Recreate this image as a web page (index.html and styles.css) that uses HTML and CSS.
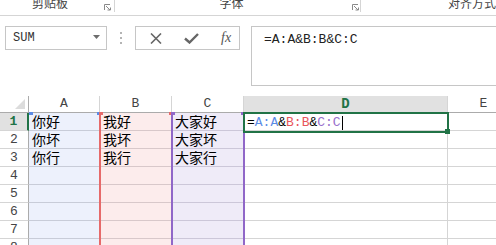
FILE: index.html
```html
<!DOCTYPE html>
<html lang="zh">
<head>
    <meta charset="UTF-8">
    <title>合并列</title>
    <link rel="stylesheet" href="styles.css">
</head>
<body>
    <div class="ribbon">
        <div class="group g-clip">
            <span class="label">剪贴板</span>
            <svg class="launcher" viewBox="0 0 7 7"><path d="M0.5 6V0.5H6" fill="none" stroke="#8a8a8a"/><path d="M2 2L6 6M3.5 6H6.5V3.5" fill="none" stroke="#8a8a8a"/></svg>
        </div>
        <div class="group g-font">
            <span class="label">字体</span>
            <svg class="launcher" viewBox="0 0 7 7"><path d="M0.5 6V0.5H6" fill="none" stroke="#8a8a8a"/><path d="M2 2L6 6M3.5 6H6.5V3.5" fill="none" stroke="#8a8a8a"/></svg>
        </div>
        <div class="group g-align">
            <span class="label">对齐方式</span>
        </div>
    </div>

    <div class="fbar">
        <div class="namebox">
            <span>SUM</span>
            <svg class="drop" viewBox="0 0 7 4"><path d="M0 0H7L3.5 4Z" fill="#6d6d6d"/></svg>
        </div>
        <div class="grip"><i></i><i></i><i></i></div>
        <div class="fbtns">
            <svg class="btn-x" viewBox="0 0 12 11"><path d="M1 0.5L11 10.5M11 0.5L1 10.5" stroke="#666" stroke-width="1.6"/></svg>
            <svg class="btn-ok" viewBox="0 0 15 11"><path d="M1 5.5L5.5 9.5L14 1" fill="none" stroke="#666" stroke-width="2.4"/></svg>
            <span class="btn-fx">fx</span>
        </div>
        <div class="finput">=A:A&amp;B:B&amp;C:C</div>
    </div>

    <div class="sheet">
        <div class="hd corner"><svg viewBox="0 0 10 10"><path d="M10 0V10H0Z" fill="#dcdcdc"/></svg></div>
        <div class="hd">A</div>
        <div class="hd">B</div>
        <div class="hd">C</div>
        <div class="hd on">D</div>
        <div class="hd">E</div>

        <div class="rh on">1</div>
        <div class="c ca">你好</div>
        <div class="c cb">我好</div>
        <div class="c cc">大家好</div>
        <div class="c"></div>
        <div class="c"></div>

        <div class="rh">2</div>
        <div class="c ca">你坏</div>
        <div class="c cb">我坏</div>
        <div class="c cc">大家坏</div>
        <div class="c"></div>
        <div class="c"></div>

        <div class="rh">3</div>
        <div class="c ca">你行</div>
        <div class="c cb">我行</div>
        <div class="c cc">大家行</div>
        <div class="c"></div>
        <div class="c"></div>

        <div class="rh">4</div>
        <div class="c ca"></div>
        <div class="c cb"></div>
        <div class="c cc"></div>
        <div class="c"></div>
        <div class="c"></div>

        <div class="rh">5</div>
        <div class="c ca"></div>
        <div class="c cb"></div>
        <div class="c cc"></div>
        <div class="c"></div>
        <div class="c"></div>

        <div class="rh">6</div>
        <div class="c ca"></div>
        <div class="c cb"></div>
        <div class="c cc"></div>
        <div class="c"></div>
        <div class="c"></div>

        <div class="rh">7</div>
        <div class="c ca"></div>
        <div class="c cb"></div>
        <div class="c cc"></div>
        <div class="c"></div>
        <div class="c"></div>

        <div class="rh">8</div>
        <div class="c ca"></div>
        <div class="c cb"></div>
        <div class="c cc"></div>
        <div class="c"></div>
        <div class="c"></div>

        <!-- range outlines while editing the formula -->
        <div class="rng rng-a"></div>
        <div class="rng rng-b"></div>
        <div class="rng rng-c"></div>

        <div class="sel"><span class="t-k">=</span><span class="t-a">A:A</span><span class="t-k">&amp;</span><span class="t-b">B:B</span><span class="t-k">&amp;</span><span class="t-c">C:C</span><i class="caret"></i></div>
    </div>
</body>
</html>
```

FILE: styles.css
```css
* {
    box-sizing: border-box;
}
body {
    margin: 0;
    width: 496px;
    height: 245px;
    overflow: hidden;
    background: #fff;
    font-family: "Liberation Mono", "Noto Sans CJK SC", monospace;
    color: #222;
}

/* ribbon group labels */
.ribbon {
    display: flex;
    height: 16px;
    border-bottom: 1px solid #d5d5d5;
    overflow: hidden;
    font-family: "Noto Sans CJK SC", sans-serif;
    font-size: 12px;
    color: #444;
}
.group {
    display: flex;
    align-items: flex-start;
    height: 12px;
    border-right: 1px solid #d5d5d5;
}
.g-clip {
    width: 117px;
}
.g-font {
    width: 250px;
}
.g-align {
    padding-left: 87px;
    border-right: none;
}
.label {
    line-height: 12px;
    margin-top: -3px;
    text-align: center;
    white-space: nowrap;
}
.g-clip .label {
    width: 100px;
}
.g-font .label {
    width: 233px;
}
.launcher {
    width: 7px;
    height: 7px;
    margin: 4px 0 0 4px;
}

/* formula bar */
.fbar {
    display: flex;
    align-items: flex-start;
    height: 80px;
    padding: 10px 0 0 5px;
}
.namebox {
    width: 102px;
    height: 24px;
    flex-shrink: 0;
    border: 1px solid #c6c6c6;
    display: flex;
    align-items: center;
    justify-content: space-between;
    padding: 0 6px 0 7px;
    font-size: 12px;
    color: #333;
}
.drop {
    width: 7px;
    height: 4px;
    margin-bottom: 3px;
}
.grip {
    width: 28px;
    height: 24px;
    flex-shrink: 0;
    display: flex;
    flex-direction: column;
    align-items: center;
    justify-content: center;
    gap: 3px;
}
.grip i {
    width: 2px;
    height: 2px;
    background: #b4b4b4;
}
.fbtns {
    width: 105px;
    height: 24px;
    flex-shrink: 0;
    border: 1px solid #c6c6c6;
    display: flex;
    align-items: center;
}
.btn-x {
    width: 12px;
    height: 11px;
    margin-left: 14px;
}
.btn-ok {
    width: 15px;
    height: 11px;
    margin-left: 22px;
}
.btn-fx {
    margin-left: 22px;
    font-family: "Liberation Serif", serif;
    font-style: italic;
    font-size: 14px;
    color: #555;
}
.finput {
    width: 260px;
    height: 60px;
    flex-shrink: 0;
    margin-left: 11px;
    border: 1px solid #c6c6c6;
    padding: 4px 0 0 12px;
    font-size: 13px;
    line-height: 18px;
    color: #222;
}

/* worksheet */
.sheet {
    position: relative;
    display: grid;
    grid-template-columns: 29px 71px 72px 72px 204px 72px;
    grid-template-rows: 17px repeat(8, 18px);
}
.hd {
    border-right: 1px solid #d5d5d5;
    border-bottom: 1px solid #ababab;
    text-align: center;
    font-size: 13px;
    line-height: 16px;
    color: #444;
}
.hd.on {
    background: #e1e1e1;
    color: #217346;
    font-weight: bold;
    font-size: 14px;
}
.corner {
    border-right-color: #ababab;
    display: flex;
    justify-content: flex-end;
    align-items: flex-end;
    padding: 0 3px 3px 0;
}
.corner svg {
    width: 10px;
    height: 10px;
}
.rh {
    border-right: 1px solid #ababab;
    border-bottom: 1px solid #d5d5d5;
    text-align: center;
    font-size: 13px;
    line-height: 17px;
    color: #444;
}
.rh.on {
    background: #e1e1e1;
    color: #217346;
    font-weight: bold;
    border-right: 2px solid #217346;
}
.c {
    border-right: 1px solid #d5d5d5;
    border-bottom: 1px solid #d5d5d5;
    padding-left: 3px;
    font-family: "Noto Sans CJK SC", sans-serif;
    font-size: 14px;
    line-height: 17px;
    color: #000;
    white-space: nowrap;
    overflow: hidden;
}
.ca {
    background: #edf1fc;
    border-bottom-color: #c8ccd8;
}
.cb {
    background: #fcecec;
    border-bottom-color: #d8c8ca;
}
.cc {
    background: #efebf8;
    border-bottom-color: #ccc7d9;
}

.rng {
    position: absolute;
    grid-row: 2 / 10;
    top: 0;
    bottom: 0;
}
.rng::before,
.rng::after {
    content: "";
    position: absolute;
    top: -1px;
    width: 4px;
    height: 3px;
}
.rng::before {
    left: -2px;
}
.rng::after {
    right: -2px;
}
.rng-a {
    grid-column: 2 / 3;
    left: 0;
    right: -1px;
    border-right: 2px solid #5b8be6;
}
.rng-a::before,
.rng-a::after {
    background: #5b8be6;
}
.rng-a::before {
    left: 0;
}
.rng-b {
    grid-column: 3 / 4;
    left: -1px;
    right: -1px;
    border-left: 2px solid #e66a6a;
    border-right: 2px solid #e66a6a;
}
.rng-b::before,
.rng-b::after {
    background: #e66a6a;
}
.rng-c {
    grid-column: 4 / 5;
    left: -1px;
    right: -1px;
    border-left: 2px solid #9067c8;
    border-right: 2px solid #9067c8;
}
.rng-c::before,
.rng-c::after {
    background: #9067c8;
}

.sel {
    position: absolute;
    grid-column: 5 / 6;
    grid-row: 2 / 3;
    top: -1px;
    left: -1px;
    right: -1px;
    bottom: -2px;
    border: 2px solid #217346;
    padding-left: 2px;
    font-size: 13px;
    line-height: 17px;
    color: #000;
    white-space: nowrap;
    display: flex;
    align-items: center;
}
.sel::after {
    content: "";
    position: absolute;
    right: -3px;
    bottom: -3px;
    width: 5px;
    height: 5px;
    background: #217346;
}
.t-a {
    color: #5b8be6;
}
.t-b {
    color: #e8555a;
}
.t-c {
    color: #9870cc;
}
.caret {
    width: 1px;
    height: 14px;
    margin-left: 1px;
    background: #000;
}
```
